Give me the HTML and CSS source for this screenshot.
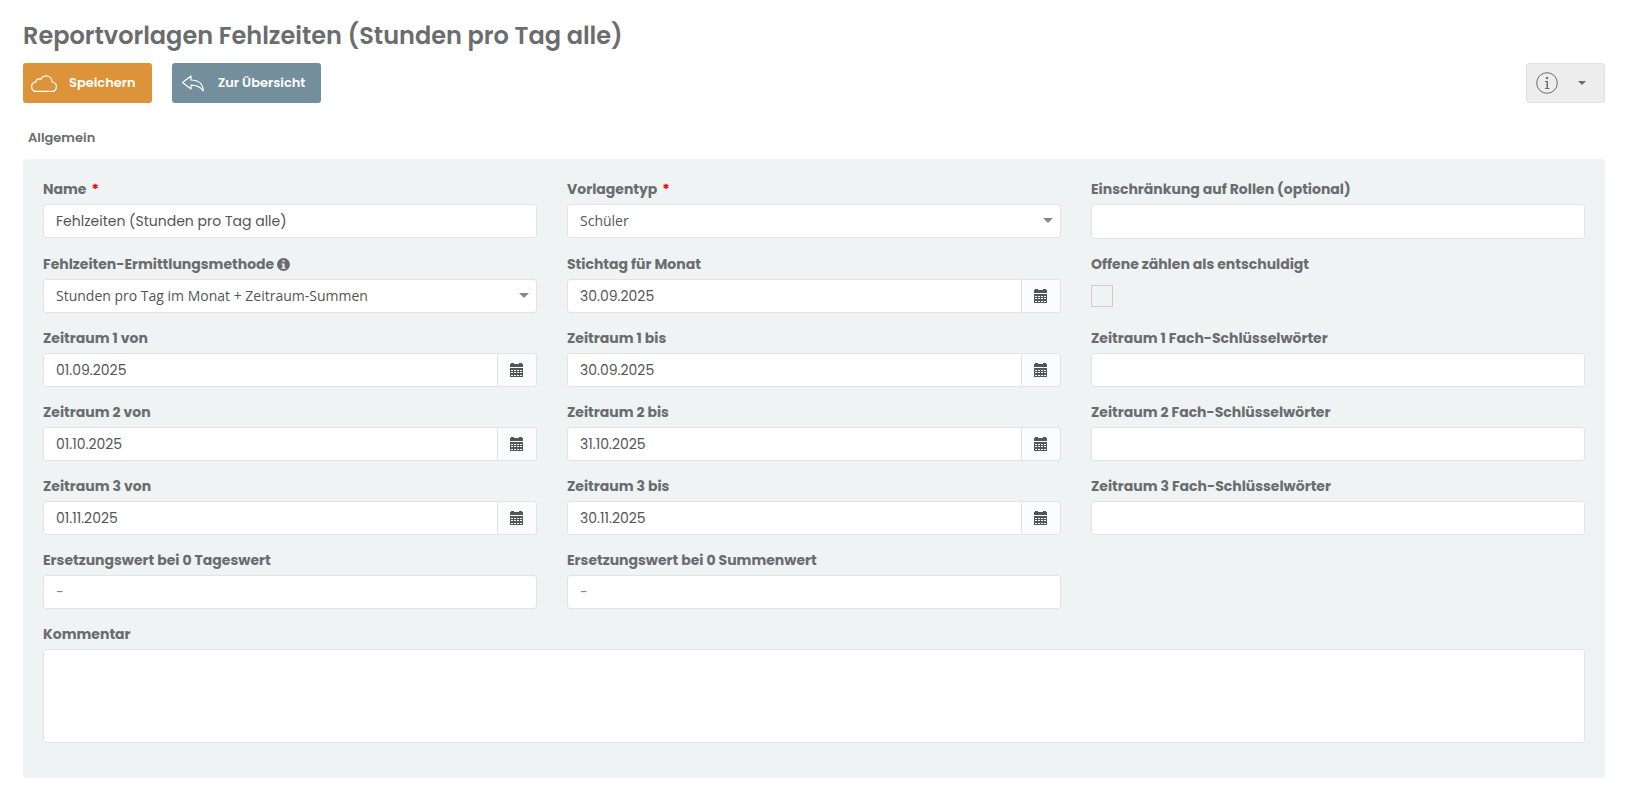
FILE: index.html
```html
<!DOCTYPE html>
<html lang="de">
<head>
    <meta charset="utf-8">
    <title>Reportvorlagen Fehlzeiten (Stunden pro Tag alle)</title>
    <link rel="stylesheet" href="styles.css">
</head>
<body>
    <svg class="sprite" aria-hidden="true">
        <symbol id="icon-calendar" viewBox="0 0 14 14">
            <path fill="currentColor" fill-rule="evenodd" d="M0 1h1V0h3v1h5V0h3v1h1v3H0zM0 5h13v9H0zM1 7h2v1H1zM4 7h2v1H4zM7 7h2v1H7zM10 7h2v1h-2zM1 9h2v1H1zM4 9h2v1H4zM7 9h2v1H7zM10 9h2v1h-2zM1 12h2v1H1zM4 12h2v1H4zM7 12h2v1H7zM10 12h2v1h-2z"/>
        </symbol>
    </svg>

    <h1>Reportvorlagen Fehlzeiten (Stunden pro Tag alle)</h1>

    <div class="toolbar">
        <button type="submit" form="report-form" class="btn btn-save">
            <svg class="btn-icon" viewBox="0 0 26 18" fill="none" stroke="currentColor" stroke-width="1.2"><path d="M5.5 17.400C2.500 17.400.6 15.400.6 12.800C.6 10.100 2.400 8.200 5 7.900C5.100 5.900 6.500 4.800 8 4.800C8.800 4.800 9.300 5 9.800 5.300C10.800 3.200 12.600 1.800 15 1.800C18.500 1.800 21 4.400 21.200 8C23.800 8.500 25.400 10.300 25.400 12.800C25.400 15.500 23.500 17.400 20.700 17.400Z"/></svg>
            <span>Speichern</span>
        </button>
        <button type="button" class="btn btn-back">
            <svg class="btn-icon" viewBox="0 0 26 18" fill="none" stroke="currentColor" stroke-width="1.2" stroke-linejoin="round"><path d="M2.500 8.500L11 2V6C18.500 6 23 10 23.200 17C20.500 12.700 17.500 11.200 11 11.200V15Z"/></svg>
            <span>Zur Übersicht</span>
        </button>
        <button type="button" class="btn-info" aria-label="Information">
            <svg class="info-icon" viewBox="0 0 22 22" fill="none" stroke="currentColor"><circle cx="11" cy="11" r="10.300"/><path stroke-width="1.500" d="M11.200 9V16"/><path d="M9 9.500H11.500M9 16.500H13.500"/><circle cx="11" cy="6" r="1.200" fill="currentColor" stroke="none"/></svg>
            <span class="caret"></span>
        </button>
    </div>

    <h2>Allgemein</h2>

    <form id="report-form" class="panel">
        <div class="form-row">
            <div class="field">
                <label for="name">Name <span class="required">*</span></label>
                <input type="text" id="name" class="control" value="Fehlzeiten (Stunden pro Tag alle)" required>
            </div>
            <div class="field">
                <label for="typ">Vorlagentyp <span class="required">*</span></label>
                <div class="select">
                    <select id="typ" class="control" required><option>Schüler</option></select>
                </div>
            </div>
            <div class="field">
                <label for="rollen">Einschränkung auf Rollen (optional)</label>
                <input type="text" id="rollen" class="control control-tags">
            </div>
        </div>

        <div class="form-row">
            <div class="field">
                <label for="methode">Fehlzeiten-Ermittlungsmethode
                    <svg class="hint-icon" viewBox="0 0 12 12"><path fill="currentColor" fill-rule="evenodd" d="M6 0a6 6 0 1 1 0 12A6 6 0 0 1 6 0zM5 2v1.500h2V2zM4 5v1h1v3H4v1h4V9H7V5z"/></svg>
                </label>
                <div class="select">
                    <select id="methode" class="control"><option>Stunden pro Tag im Monat + Zeitraum-Summen</option></select>
                </div>
            </div>
            <div class="field">
                <label for="stichtag">Stichtag für Monat</label>
                <div class="date">
                    <input type="text" id="stichtag" class="control" value="30.09.2025">
                    <button type="button" aria-label="Kalender"><svg><use href="#icon-calendar"/></svg></button>
                </div>
            </div>
            <div class="field">
                <label for="offene">Offene zählen als entschuldigt</label>
                <input type="checkbox" id="offene" class="check">
            </div>
        </div>

        <div class="form-row">
            <div class="field">
                <label for="von1">Zeitraum 1 von</label>
                <div class="date">
                    <input type="text" id="von1" class="control" value="01.09.2025">
                    <button type="button" aria-label="Kalender"><svg><use href="#icon-calendar"/></svg></button>
                </div>
            </div>
            <div class="field">
                <label for="bis1">Zeitraum 1 bis</label>
                <div class="date">
                    <input type="text" id="bis1" class="control" value="30.09.2025">
                    <button type="button" aria-label="Kalender"><svg><use href="#icon-calendar"/></svg></button>
                </div>
            </div>
            <div class="field">
                <label for="fach1">Zeitraum 1 Fach-Schlüsselwörter</label>
                <input type="text" id="fach1" class="control">
            </div>
        </div>

        <div class="form-row">
            <div class="field">
                <label for="von2">Zeitraum 2 von</label>
                <div class="date">
                    <input type="text" id="von2" class="control" value="01.10.2025">
                    <button type="button" aria-label="Kalender"><svg><use href="#icon-calendar"/></svg></button>
                </div>
            </div>
            <div class="field">
                <label for="bis2">Zeitraum 2 bis</label>
                <div class="date">
                    <input type="text" id="bis2" class="control" value="31.10.2025">
                    <button type="button" aria-label="Kalender"><svg><use href="#icon-calendar"/></svg></button>
                </div>
            </div>
            <div class="field">
                <label for="fach2">Zeitraum 2 Fach-Schlüsselwörter</label>
                <input type="text" id="fach2" class="control">
            </div>
        </div>

        <div class="form-row">
            <div class="field">
                <label for="von3">Zeitraum 3 von</label>
                <div class="date">
                    <input type="text" id="von3" class="control" value="01.11.2025">
                    <button type="button" aria-label="Kalender"><svg><use href="#icon-calendar"/></svg></button>
                </div>
            </div>
            <div class="field">
                <label for="bis3">Zeitraum 3 bis</label>
                <div class="date">
                    <input type="text" id="bis3" class="control" value="30.11.2025">
                    <button type="button" aria-label="Kalender"><svg><use href="#icon-calendar"/></svg></button>
                </div>
            </div>
            <div class="field">
                <label for="fach3">Zeitraum 3 Fach-Schlüsselwörter</label>
                <input type="text" id="fach3" class="control">
            </div>
        </div>

        <div class="form-row">
            <div class="field">
                <label for="tageswert">Ersetzungswert bei 0 Tageswert</label>
                <input type="text" id="tageswert" class="control" placeholder="-">
            </div>
            <div class="field">
                <label for="summenwert">Ersetzungswert bei 0 Summenwert</label>
                <input type="text" id="summenwert" class="control" placeholder="-">
            </div>
        </div>

        <div class="field">
            <label for="kommentar">Kommentar</label>
            <textarea id="kommentar" class="control"></textarea>
        </div>
    </form>
</body>
</html>
```
FILE: styles.css
```css
* {
    box-sizing: border-box;
}
body {
    font-family: Poppins, Inter, sans-serif;
    font-size: 14px;
    line-height: 20px;
    color: #6a6c6f;
    background-color: #fff;
    margin: 0;
    padding: 20px 23px;
}
.sprite {
    position: absolute;
    width: 0;
    height: 0;
}
h1 {
    margin: 0 0 11px;
    font-size: 24px;
    line-height: 32px;
    font-weight: 600;
}
h2 {
    margin: 25px 5px 11px;
    font-size: 13px;
    line-height: 20px;
    font-weight: 600;
}
.toolbar {
    display: flex;
    gap: 20px;
}
.btn {
    display: flex;
    align-items: center;
    gap: 12px;
    height: 40px;
    padding: 0 16px 0 8px;
    border: none;
    border-radius: 3px;
    color: #fff;
    font-family: inherit;
    font-size: 13px;
    font-weight: 600;
    cursor: pointer;
}
.btn-save {
    background-color: #dc933a;
}
.btn-back {
    background-color: #738f9b;
}
.btn-icon {
    width: 26px;
    height: 18px;
}
.btn-info {
    display: flex;
    align-items: center;
    gap: 20px;
    height: 40px;
    margin-left: auto;
    padding: 0 18px 0 9px;
    border: 1px solid #e1e1e1;
    border-radius: 3px;
    background-color: #ededed;
    color: #6a6c6f;
    cursor: pointer;
}
.info-icon {
    width: 22px;
    height: 22px;
}
.caret {
    border: 4px solid transparent;
    border-top-color: #6a6c6f;
    border-bottom: none;
}
.panel {
    padding: 20px;
    border-radius: 4px;
    background-color: #eff3f4;
}
.form-row {
    display: grid;
    grid-template-columns: repeat(3, 1fr);
    column-gap: 30px;
}
.field {
    margin-bottom: 15px;
}
label {
    display: block;
    margin-bottom: 5px;
    font-weight: 700;
}
.required {
    margin-left: 2px;
    color: #f00;
}
.hint-icon {
    width: 13px;
    height: 13px;
    vertical-align: -2px;
}
.control {
    display: block;
    width: 100%;
    height: 34px;
    margin: 0;
    padding: 0 12px;
    border: 1px solid #e1e4e5;
    border-radius: 3px;
    background-color: #fff;
    color: #555;
    font-family: inherit;
    font-size: 14px;
}
.control::placeholder {
    color: #888;
}
.control-tags {
    height: 35px;
}
textarea.control {
    height: 94px;
    padding: 6px 12px;
    resize: none;
}
.select {
    position: relative;
}
.select::after {
    content: "";
    position: absolute;
    top: 14px;
    right: 8px;
    border: 5px solid transparent;
    border-top-color: #888;
    border-bottom: none;
    pointer-events: none;
}
select.control {
    appearance: none;
    padding-bottom: 2px;
    font-family: "Open Sans", sans-serif;
}
.date {
    display: flex;
}
.date .control {
    flex: 1;
    min-width: 0;
    border-radius: 3px 0 0 3px;
}
.date button {
    display: flex;
    align-items: center;
    justify-content: center;
    width: 39px;
    padding: 0;
    border: 1px solid #e1e4e5;
    border-left: none;
    border-radius: 0 3px 3px 0;
    background-color: #fafbfd;
    color: #555;
    cursor: pointer;
}
.date svg {
    width: 14px;
    height: 14px;
}
.check {
    display: block;
    appearance: none;
    width: 22px;
    height: 22px;
    margin: 6px 0 0;
    border: 1px solid #d1ccc6;
}
label + .check {
    margin-top: 11px;
}
```
